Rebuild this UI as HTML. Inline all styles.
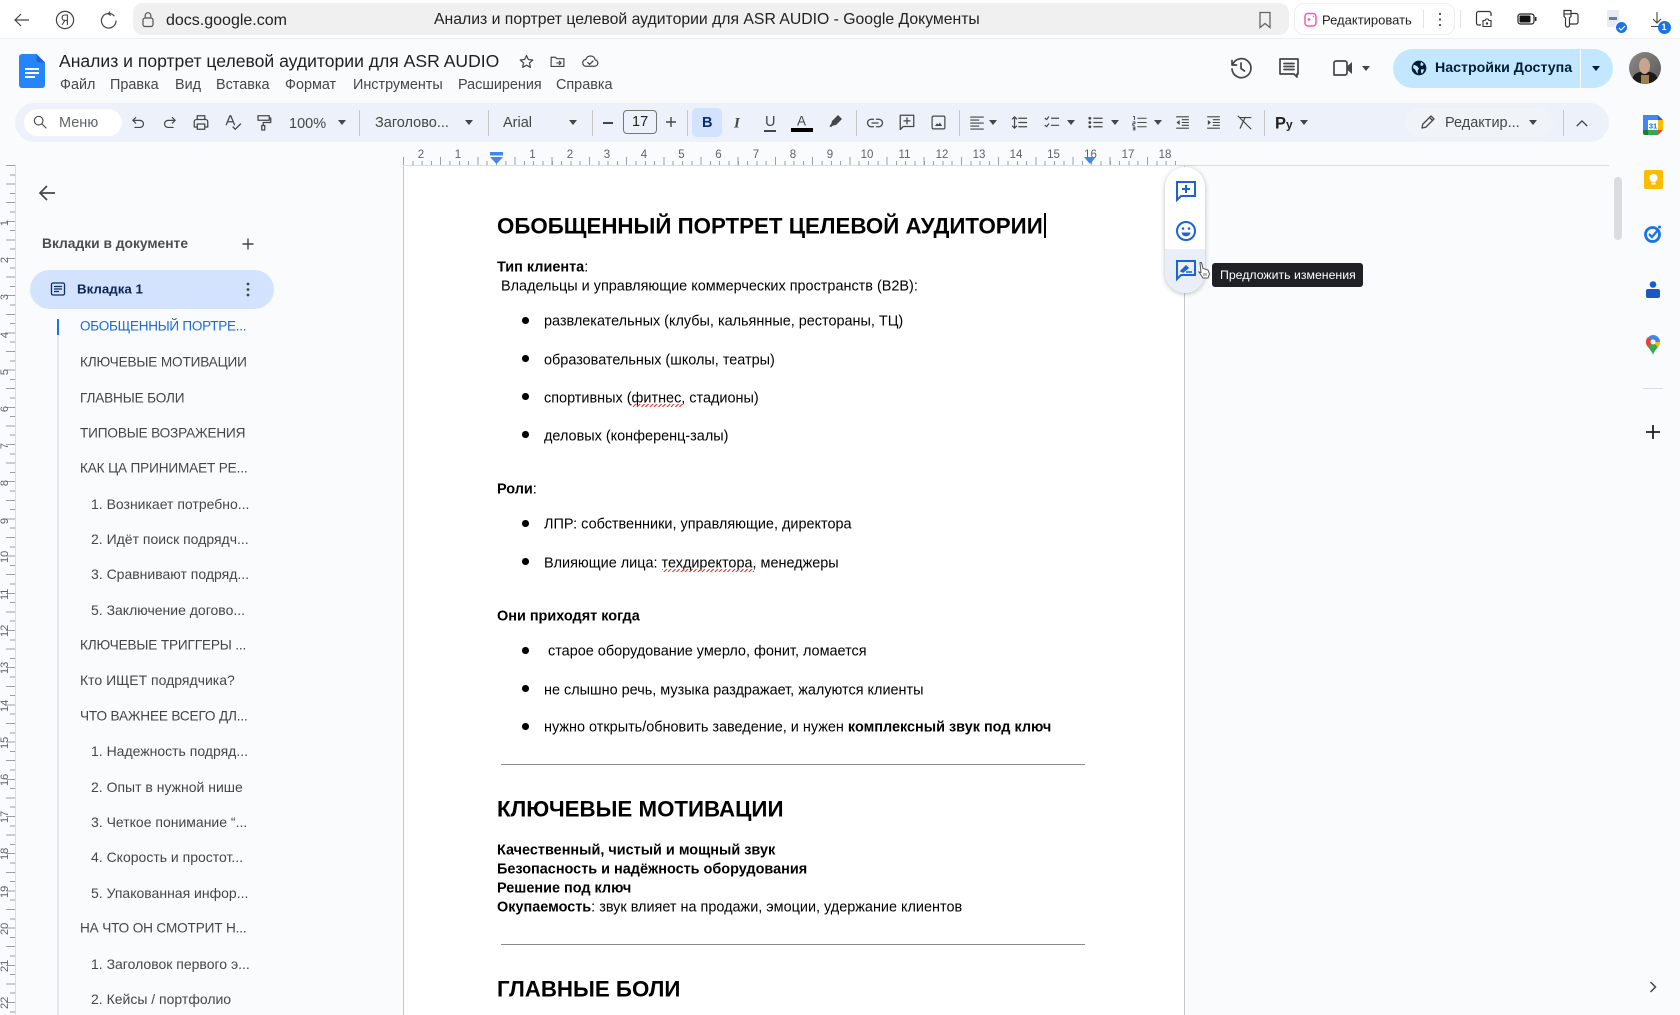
<!DOCTYPE html>
<html lang="ru"><head><meta charset="utf-8"><title>Анализ и портрет целевой аудитории для ASR AUDIO - Google Документы</title>
<style>
*{box-sizing:border-box}
html,body{margin:0;padding:0;width:1680px;height:1015px;overflow:hidden;background:#f9fbfd;font-family:"Liberation Sans","Noto Sans CJK SC",sans-serif;color:#000}
#w{position:relative;width:1680px;height:1015px;overflow:hidden;filter:blur(.35px)}
.b{position:absolute}
.t{position:absolute;white-space:nowrap;transform:translateY(calc(-50% + 1.5px));line-height:1.2}
.u{color:#444746;font-size:14.5px}
svg{position:absolute;overflow:visible}
.s{fill:none;stroke:#444746;stroke-width:1.7;stroke-linecap:round;stroke-linejoin:round}
.f{fill:#444746;stroke:none}
.sep{position:absolute;width:1px;top:110px;height:26px;background:#c7c7c7}
.dd{position:absolute;width:0;height:0;border-left:4.5px solid transparent;border-right:4.5px solid transparent;border-top:5px solid #444746;top:120px}
.t.d{font-size:14.45px;color:#000;transform:translateY(calc(-50% + 2px))}
.t.h{font-size:22.3px;font-weight:700;color:#000;transform:translateY(calc(-50% + 2px))}
.bul{position:absolute;left:522px;width:6.5px;height:6.5px;border-radius:50%;background:#000}
.r{position:absolute;top:148px;font-size:11.5px;color:#5f6368;transform:translateX(-50%);line-height:14px}
.rl{position:absolute;left:0;width:10px;text-align:center;font-size:11px;color:#5f6368;transform:rotate(-90deg);line-height:10px}
.n{font-size:14.4px;color:#444746}
.t.m{font-size:14px;color:#444746}
.t.c{font-size:13.6px;letter-spacing:-.15px;color:#444746}
.hr{position:absolute;left:501px;width:584px;height:1px;background:#8a8a8a}
.wave{position:absolute;height:3px;background:repeating-linear-gradient(135deg,#e33 0 1px,transparent 1px 3px)}
</style></head><body><div id="w">

<!-- browser bar -->
<div class="b" style="left:0;top:0;width:1680px;height:39px;background:#fff;border-bottom:1px solid #eceef1"></div>
<svg style="left:12px;top:10px" width="20" height="20" viewBox="0 0 20 20"><path d="M17 10H3M9 4l-6 6 6 6" fill="none" stroke="#444" stroke-width="1.2"/></svg>
<svg style="left:55px;top:10px" width="20" height="20" viewBox="0 0 20 20"><circle cx="10" cy="10" r="8.6" fill="none" stroke="#444" stroke-width="1.2"/><path d="M12.4 15V5H10c-1.8 0-2.9 1-2.9 2.7s1 2.7 2.9 2.7h2.4M9.8 10.400 7 15" fill="none" stroke="#444" stroke-width="1.1"/></svg>
<svg style="left:99px;top:10px" width="20" height="20" viewBox="0 0 20 20"><path d="M15.500 6.300A7.300 7.300 0 1 0 17 10.500M11 1.500l-1.600 2.400 2.600 1.500" fill="none" stroke="#444" stroke-width="1.200"/></svg>
<div class="b" style="left:133px;top:3px;width:1156px;height:32px;background:#f0f0f0;border-radius:10px"></div>
<svg style="left:141px;top:11px" width="14" height="17" viewBox="0 0 14 17"><rect x="2" y="7" width="10" height="8.500" rx="2" fill="none" stroke="#555" stroke-width="1.200"/><path d="M4.200 7V4.500a2.800 2.800 0 0 1 5.600 0V7" fill="none" stroke="#555" stroke-width="1.200"/></svg>
<div class="t" style="left:166px;top:19px;font-size:16px;color:#222">docs.google.com</div>
<div class="t" style="left:434px;top:19px;font-size:15.78px;color:#222">Анализ и портрет целевой аудитории для ASR AUDIO - Google Документы</div>
<svg style="left:1258px;top:11px" width="14" height="18" viewBox="0 0 14 18"><path d="M2 1.500h10v15l-5-4-5 4z" fill="none" stroke="#666" stroke-width="1.300"/></svg>
<div class="b" style="left:1294px;top:3px;width:161px;height:32px;background:#fff;border:1px solid #eee;border-radius:10px"></div>
<svg style="left:1304px;top:12px" width="14" height="15" viewBox="0 0 14 15"><rect x="1" y="1.500" width="11" height="12.500" rx="3" fill="none" stroke="#f15bb5" stroke-width="1.500"/><path d="M5 6v3M3.500 7.500h3M9 4l1 1" stroke="#f15bb5" stroke-width="1.200"/></svg>
<div class="t" style="left:1322px;top:18.500px;font-size:13px;color:#222">Редактировать</div>
<div class="b" style="left:1423px;top:10px;width:1px;height:18px;background:#e3e3e3"></div>
<svg style="left:1437px;top:12px" width="6" height="15" viewBox="0 0 6 15"><circle cx="3" cy="2" r="1.100" fill="#444"/><circle cx="3" cy="7.500" r="1.100" fill="#444"/><circle cx="3" cy="13" r="1.100" fill="#444"/></svg>
<div class="b" style="left:1460px;top:10px;width:1px;height:18px;background:#e3e3e3"></div>
<svg style="left:1475px;top:10px" width="18" height="18" viewBox="0 0 18 18"><path d="M6 15H3.500A2 2 0 0 1 1.500 13V3.500A2 2 0 0 1 3.500 1.500H14a2 2 0 0 1 2 2V6" fill="none" stroke="#333" stroke-width="1.200"/><path d="M8 10.500h2l1-1.500h2l1 1.500h2v6H8z" fill="none" stroke="#333" stroke-width="1.100"/><circle cx="12" cy="13.500" r="1.200" fill="#333"/></svg>
<svg style="left:1517px;top:13px" width="20" height="12" viewBox="0 0 20 12"><rect x="1" y="1" width="16" height="10" rx="2.500" fill="none" stroke="#222" stroke-width="1.200"/><rect x="2.500" y="2.500" width="11" height="7" rx="1" fill="#111"/><rect x="18" y="4" width="1.500" height="4" fill="#222"/></svg>
<svg style="left:1561px;top:9px" width="20" height="20" viewBox="0 0 20 20"><path d="M3 1.500h7v6l-1.500 1.500v7a2 2 0 0 1-4 0V9L3 7.500zM10 4.500h5a2 2 0 0 1 2 2V13a2 2 0 0 1-2 2H9" fill="none" stroke="#333" stroke-width="1.200"/><path d="M3 5h7" stroke="#333" stroke-width="1.100"/></svg>
<div class="b" style="left:1607px;top:10px;width:12px;height:17px;background:#e8ebef"></div><div class="b" style="left:1609px;top:17px;width:8px;height:3px;background:#5a7fb0"></div>
<div class="b" style="left:1615px;top:21px;width:13px;height:13px;background:#1a73e8;border-radius:50%;border:1px solid #fff"></div>
<svg style="left:1618px;top:24px" width="8" height="8" viewBox="0 0 8 8"><path d="M1 4l2 2 4-4" stroke="#fff" fill="none" stroke-width="1.200"/></svg>
<svg style="left:1650px;top:12px" width="14" height="16" viewBox="0 0 14 16"><path d="M7 0v10M3 7l4 4 4-4M1 14.500h10" fill="none" stroke="#444" stroke-width="1.100"/></svg>
<div class="b" style="left:1658px;top:21px;width:13px;height:13px;background:#1a73e8;border-radius:50%"></div>
<div class="t" style="left:1661.500px;top:26px;font-size:9px;font-weight:700;color:#fff">1</div>

<!-- docs header -->
<svg style="left:19px;top:54px" width="26" height="34" viewBox="0 0 26 34"><path d="M3 0h14.500L26 8.500V31a3 3 0 0 1-3 3H3a3 3 0 0 1-3-3V3a3 3 0 0 1 3-3z" fill="#2684fc"/><path d="M17.500 0 26 8.500h-6a2.500 2.500 0 0 1-2.500-2.500z" fill="#1967d2"/><path d="M6 14h14v2H6zM6 18h14v2H6zM6 22h10v2H6z" fill="#fff"/></svg>
<div class="t" style="left:59px;top:60px;font-size:17.57px;color:#1f1f1f">Анализ и портрет целевой аудитории для ASR AUDIO</div>
<svg style="left:518px;top:53px" width="17" height="17" viewBox="0 0 24 24"><path class="s" d="M12 3.500l2.600 5.700 6.200.7-4.600 4.200 1.300 6.100L12 17.200 6.500 20.200l1.300-6.100L3.200 9.900l6.200-.7z"/></svg>
<svg style="left:549px;top:53px" width="17" height="17" viewBox="0 0 24 24"><path class="s" d="M3 6h6l2 2h10v11H3zM11 14h6M14.500 11.500l2.500 2.500-2.500 2.500"/></svg>
<svg style="left:580px;top:52px" width="20" height="18" viewBox="0 0 24 24"><path class="s" d="M7 19a4.500 4.500 0 0 1-.6-9A6.500 6.500 0 0 1 19 10.500a4.300 4.300 0 0 1-1 8.500zM9 14l2.500 2.500L16 12"/></svg>
<div class="t n" style="left:60px;top:84px">Файл</div>
<div class="t n" style="left:110px;top:84px">Правка</div>
<div class="t n" style="left:175px;top:84px">Вид</div>
<div class="t n" style="left:216px;top:84px">Вставка</div>
<div class="t n" style="left:285px;top:84px">Формат</div>
<div class="t n" style="left:353px;top:84px">Инструменты</div>
<div class="t n" style="left:458px;top:84px">Расширения</div>
<div class="t n" style="left:556px;top:84px">Справка</div>

<svg style="left:1229px;top:56px" width="24" height="24" viewBox="0 0 24 24"><path class="s" d="M3.500 9A9.500 9.500 0 1 1 3 13M3 4.500V9h4.500M12 7v5.500l3.500 2.500" stroke-width="2"/></svg>
<svg style="left:1277px;top:56px" width="24" height="24" viewBox="0 0 24 24"><path class="s" d="M3 3h18v15h-1v3l-3-3H3zM7 7.500h10M7 10.500h10M7 13.500h10" stroke-width="2"/></svg>
<svg style="left:1331px;top:56px" width="24" height="24" viewBox="0 0 24 24"><path class="s" d="M5 5h9a2 2 0 0 1 2 2v10a2 2 0 0 1-2 2H3V7a2 2 0 0 1 2-2z" stroke-width="2"/><path class="f" d="M16.500 10 21 6v12l-4.500-4z"/></svg>
<div class="dd" style="left:1362px;top:66px"></div>
<div class="b" style="left:1393px;top:49px;width:220px;height:39px;background:#c2e7ff;border-radius:20px"></div>
<div class="b" style="left:1580px;top:49px;width:1px;height:39px;background:#f9fbfd"></div>
<svg style="left:1411px;top:60px" width="16" height="16" viewBox="0 0 24 24"><circle cx="12" cy="12" r="11" fill="#001d35"/><path d="M4 7l5 2 3 4-2 3v5l-2-3-2-4-3-2zM15 3l4 3-2 3-3-1zM15 14h5l-3 6-2-1z" fill="#c2e7ff"/></svg>
<div class="t" style="left:1435px;top:67px;font-size:14.2px;font-weight:700;color:#001d35">Настройки Доступа</div>
<div class="dd" style="left:1592px;top:66px;border-top-color:#001d35"></div>
<div class="b" style="left:1629px;top:52px;width:32px;height:32px;border-radius:50%;background:linear-gradient(135deg,#8d8b88,#5a5856);overflow:hidden">
<div class="b" style="left:3px;top:20px;width:26px;height:14px;border-radius:9px 9px 0 0;background:#1d1a18"></div>
<div class="b" style="left:12px;top:23px;width:8px;height:10px;background:#a08050"></div>
<div class="b" style="left:10px;top:6px;width:11px;height:16px;border-radius:50%;background:#c9a58c"></div></div>

<!-- toolbar -->
<div class="b" style="left:15px;top:103px;width:1594px;height:39px;background:#edf2fa;border-radius:20px"></div>
<div class="b" style="left:24px;top:109px;width:98px;height:27px;background:#fff;border-radius:14px"></div>
<svg style="left:32px;top:114px" width="16" height="16" viewBox="0 0 24 24"><path class="s" d="M10 3.500a6.500 6.500 0 1 1 0 13 6.500 6.500 0 0 1 0-13zM15 15l6 6"/></svg>
<div class="t u" style="left:59px;top:121.500px;color:#5f6368">Меню</div>
<svg style="left:130px;top:114px" width="17" height="17" viewBox="0 0 24 24"><path class="s" d="M8 5 4 9l4 4M4 9h10a5 5 0 0 1 0 10H7"/></svg>
<svg style="left:161px;top:114px" width="17" height="17" viewBox="0 0 24 24"><path class="s" d="M16 5l4 4-4 4M20 9H10a5 5 0 0 0 0 10h7"/></svg>
<svg style="left:192px;top:113px" width="18" height="19" viewBox="0 0 24 24"><path class="s" d="M7 8V3h10v5M7 18H3v-7a3 3 0 0 1 3-3h12a3 3 0 0 1 3 3v7h-4M7 14h10v7H7z"/></svg>
<svg style="left:224px;top:113px" width="18" height="19" viewBox="0 0 24 24"><path class="s" d="M3 15 8 3h1l5 12M5 11h7M12 18l3 3 7-7"/></svg>
<svg style="left:255px;top:113px" width="18" height="19" viewBox="0 0 24 24"><path class="s" d="M4 3h15v6H4zM19 6h2v6H11v4M9 16h4v6H9z"/></svg>
<div class="t u" style="left:289px;top:122.500px">100%</div><div class="dd" style="left:338px"></div>
<div class="sep" style="left:359px"></div>
<div class="t u" style="left:375px;top:121.500px">Заголово...</div><div class="dd" style="left:465px"></div>
<div class="sep" style="left:488px"></div>
<div class="t u" style="left:503px;top:121.500px">Arial</div><div class="dd" style="left:569px"></div>
<div class="sep" style="left:592px"></div>
<div class="b" style="left:603px;top:122px;width:10px;height:1.500px;background:#444746"></div>
<div class="b" style="left:623px;top:110px;width:34px;height:24px;border:1px solid #747775;border-radius:4px"></div>
<div class="t u" style="left:632px;top:121px;color:#222">17</div>
<svg style="left:664px;top:115px" width="14" height="14" viewBox="0 0 14 14"><path d="M7 2v10M2 7h10" stroke="#444746" stroke-width="1.400"/></svg>
<div class="sep" style="left:687px"></div>
<div class="b" style="left:692px;top:108px;width:30px;height:29px;background:#d3e3fd;border-radius:5px"></div>
<div class="t" style="left:702px;top:122px;font-size:14.500px;font-weight:700;color:#0b2d6b">B</div>
<div class="t" style="left:734px;top:122px;font-size:15px;font-style:italic;font-family:'Liberation Serif',serif;font-weight:700;color:#444746">I</div>
<div class="t" style="left:765px;top:121px;font-size:14.500px;color:#444746">U</div><div class="b" style="left:764px;top:130px;width:12px;height:1.500px;background:#444746"></div>
<div class="t" style="left:797px;top:120px;font-size:13.500px;color:#444746">A</div><div class="b" style="left:791px;top:128px;width:22px;height:4px;background:#000"></div>
<svg style="left:828px;top:113px" width="16" height="16" viewBox="0 0 24 24"><path class="f" d="M15 3l6 6-9 9-5 1-2 2-3-1 3-4 1-4z"/></svg>
<div class="sep" style="left:856px"></div>
<svg style="left:866px;top:114px" width="18" height="18" viewBox="0 0 24 24"><path class="s" d="M10 7H7a5 5 0 0 0 0 10h3M14 7h3a5 5 0 0 1 0 10h-3M8 12h8"/></svg>
<svg style="left:898px;top:113px" width="18" height="18" viewBox="0 0 24 24"><path class="s" d="M3 3h18v15H7l-4 4zM12 6.500v8M8 10.500h8"/></svg>
<svg style="left:930px;top:114px" width="17" height="17" viewBox="0 0 24 24"><rect class="s" x="3" y="3" width="18" height="18" rx="2"/><path class="f" d="M7 17l3-4 2 2 2-3 3 5z"/></svg>
<div class="sep" style="left:959px"></div>
<svg style="left:968px;top:114px" width="18" height="18" viewBox="0 0 24 24"><path d="M3 4h18M3 8h12M3 12h18M3 16h12M3 20h18" stroke="#444746" stroke-width="1.500" fill="none"/></svg><div class="dd" style="left:989px"></div>
<svg style="left:1011px;top:114px" width="17" height="17" viewBox="0 0 24 24"><path class="s" d="M5 4v16M2 7l3-3 3 3M2 17l3 3 3-3M11 6h11M11 12h11M11 18h11"/></svg>
<svg style="left:1043px;top:114px" width="17" height="17" viewBox="0 0 24 24"><path class="s" d="M3 6l2 2 3-4M12 6h10M3 16l2 2 3-4M12 16h10" stroke-width="1.500"/></svg><div class="dd" style="left:1067px"></div>
<svg style="left:1087px;top:114px" width="17" height="17" viewBox="0 0 24 24"><circle cx="4" cy="6" r="2" class="f"/><circle cx="4" cy="12" r="2" class="f"/><circle cx="4" cy="18" r="2" class="f"/><path d="M9 6h13M9 12h13M9 18h13" stroke="#444746" stroke-width="1.600"/></svg><div class="dd" style="left:1111px"></div>
<svg style="left:1131px;top:114px" width="17" height="17" viewBox="0 0 24 24"><path d="M9 6h13M9 12h13M9 18h13M3 3.500h2v5M2.500 11h3v2.500h-3V16h3M2.500 18.500h3v4h-3M3 20.500h2" stroke="#444746" stroke-width="1.300" fill="none"/></svg><div class="dd" style="left:1154px"></div>
<svg style="left:1174px;top:114px" width="17" height="17" viewBox="0 0 24 24"><path d="M3 4h18M11 8h10M11 12h10M11 16h10M3 20h18" stroke="#444746" stroke-width="1.500" fill="none"/><path class="f" d="M8 8.500v7L3.500 12z"/></svg>
<svg style="left:1205px;top:114px" width="17" height="17" viewBox="0 0 24 24"><path d="M3 4h18M11 8h10M11 12h10M11 16h10M3 20h18" stroke="#444746" stroke-width="1.500" fill="none"/><path class="f" d="M4 8.500v7L8.500 12z"/></svg>
<svg style="left:1236px;top:114px" width="17" height="17" viewBox="0 0 24 24"><path class="s" d="M5 5h16M13 5l-4 8-3 7M3 3l18 18" stroke-width="1.600"/></svg>
<div class="sep" style="left:1264px"></div>
<div class="t" style="left:1275px;top:122.500px;font-size:16.500px;font-weight:700;color:#222">Р<span style="font-size:12px">у</span></div><div class="dd" style="left:1300px"></div>
<div class="b" style="left:1405px;top:108px;width:148px;height:29px;background:#f0f4f9;border-radius:15px"></div>
<svg style="left:1419px;top:113px" width="18" height="18" viewBox="0 0 24 24"><path class="s" d="M4 20l1-5L16 4l4 4L9 19zM14 6l4 4"/></svg>
<div class="t u" style="left:1445px;top:121.500px">Редактир...</div><div class="dd" style="left:1529px"></div>
<div class="sep" style="left:1563px"></div>
<svg style="left:1575px;top:119px" width="14" height="9" viewBox="0 0 16 10"><path d="M2 8l6-6 6 6" fill="none" stroke="#444746" stroke-width="1.500"/></svg>

<!-- horizontal ruler -->
<div class="b" style="left:403px;top:157px;width:781px;height:8px;background:repeating-linear-gradient(90deg,#9aa0a6 0 1px,transparent 1px 37.200px) -0.100px 0/100% 8px no-repeat"></div>
<div class="b" style="left:403px;top:161px;width:781px;height:4px;background:repeating-linear-gradient(90deg,#9aa0a6 0 1px,transparent 1px 9.300px)"></div>
<div class="b" style="left:15px;top:164.500px;width:1594px;height:1.500px;background:#dadce0"></div>
<div class="r" style="left:421px">2</div><div class="r" style="left:458px">1</div>
<div class="r" style="left:532.500px">1</div><div class="r" style="left:570px">2</div><div class="r" style="left:607px">3</div><div class="r" style="left:644px">4</div><div class="r" style="left:681.500px">5</div><div class="r" style="left:718.500px">6</div><div class="r" style="left:756px">7</div><div class="r" style="left:793px">8</div><div class="r" style="left:830px">9</div><div class="r" style="left:867px">10</div><div class="r" style="left:904.500px">11</div><div class="r" style="left:942px">12</div><div class="r" style="left:979px">13</div><div class="r" style="left:1016px">14</div><div class="r" style="left:1053.500px">15</div><div class="r" style="left:1090.500px">16</div><div class="r" style="left:1128px">17</div><div class="r" style="left:1165px">18</div>
<svg style="left:490px;top:152px" width="13" height="13" viewBox="0 0 13 13"><rect x="0" y="0" width="13" height="3.500" fill="#4285f4"/><path d="M0 5h13l-6.500 7z" fill="#4285f4"/></svg>
<svg style="left:1084px;top:157px" width="12" height="8" viewBox="0 0 12 8"><path d="M0 0h12L6 7z" fill="#4285f4"/></svg>

<!-- vertical ruler -->
<div class="b" style="left:10px;top:165px;width:5px;height:850px;background:repeating-linear-gradient(180deg,#9aa0a6 0 1px,transparent 1px 9.300px)"></div>
<div class="b" style="left:6px;top:165px;width:9px;height:850px;background:repeating-linear-gradient(180deg,#9aa0a6 0 1px,transparent 1px 18.600px)"></div>
<div class="rl" style="top:218px">1</div><div class="rl" style="top:255px">2</div><div class="rl" style="top:292px">3</div><div class="rl" style="top:330px">4</div><div class="rl" style="top:367px">5</div><div class="rl" style="top:404px">6</div><div class="rl" style="top:441px">7</div><div class="rl" style="top:478px">8</div><div class="rl" style="top:516px">9</div><div class="rl" style="top:553px">10</div><div class="rl" style="top:590px">11</div><div class="rl" style="top:627px">12</div><div class="rl" style="top:664px">13</div><div class="rl" style="top:702px">14</div><div class="rl" style="top:739px">15</div><div class="rl" style="top:776px">16</div><div class="rl" style="top:813px">17</div><div class="rl" style="top:850px">18</div><div class="rl" style="top:888px">19</div><div class="rl" style="top:925px">20</div><div class="rl" style="top:962px">21</div><div class="rl" style="top:999px">22</div>

<!-- sidebar -->
<div class="b" style="left:15px;top:165px;width:388px;height:850px;background:#f9fbfd;border-left:1px solid #dadce0"></div>
<svg style="left:37px;top:183px" width="20" height="20" viewBox="0 0 20 20"><path d="M18 10H3M10 3l-7 7 7 7" fill="none" stroke="#444746" stroke-width="1.700"/></svg>
<div class="t" style="left:42px;top:243px;font-size:13.8px;font-weight:700;color:#4b4d4f">Вкладки в документе</div>
<svg style="left:242px;top:238px" width="12" height="12" viewBox="0 0 12 12"><path d="M6 .5v11M.5 6h11" stroke="#444746" stroke-width="1.400"/></svg>
<div class="b" style="left:30px;top:270px;width:244px;height:39px;background:#d3e3fd;border-radius:20px"></div>
<svg style="left:50px;top:281px" width="16" height="16" viewBox="0 0 16 16"><rect x="1.500" y="2" width="13" height="12" rx="1.500" fill="none" stroke="#0b2d6b" stroke-width="1.300"/><path d="M4 5.500h8M4 8h8M4 10.500h5" stroke="#0b2d6b" stroke-width="1.200"/></svg>
<div class="t" style="left:77px;top:288px;font-size:13.3px;font-weight:700;color:#0b2557">Вкладка 1</div>
<svg style="left:245px;top:282px" width="6" height="15" viewBox="0 0 6 15"><circle cx="3" cy="2" r="1.400" fill="#444746"/><circle cx="3" cy="7.500" r="1.400" fill="#444746"/><circle cx="3" cy="13" r="1.400" fill="#444746"/></svg>
<div class="b" style="left:57px;top:319px;width:2px;height:696px;background:#e3e6ea"></div>
<div class="b" style="left:57px;top:319px;width:2px;height:16px;background:#1a73e8"></div>
<div class="t" style="left:80px;top:325px;font-size:13.5px;letter-spacing:-.25px;color:#1a6adf">ОБОБЩЕННЫЙ ПОРТРЕ...</div>
<div class="t c" style="left:80px;top:361px">КЛЮЧЕВЫЕ МОТИВАЦИИ</div>
<div class="t c" style="left:80px;top:396.500px">ГЛАВНЫЕ БОЛИ</div>
<div class="t c" style="left:80px;top:432px">ТИПОВЫЕ ВОЗРАЖЕНИЯ</div>
<div class="t c" style="left:80px;top:467px">КАК ЦА ПРИНИМАЕТ РЕ...</div>
<div class="t m" style="left:91px;top:502.500px">1. Возникает потребно...</div>
<div class="t m" style="left:91px;top:538px">2. Идёт поиск подрядч...</div>
<div class="t m" style="left:91px;top:573px">3. Сравнивают подряд...</div>
<div class="t m" style="left:91px;top:608.500px">5. Заключение догово...</div>
<div class="t c" style="left:80px;top:644px">КЛЮЧЕВЫЕ ТРИГГЕРЫ ...</div>
<div class="t m" style="left:80px;top:679px">Кто ИЩЕТ подрядчика?</div>
<div class="t c" style="left:80px;top:714.500px">ЧТО ВАЖНЕЕ ВСЕГО ДЛ...</div>
<div class="t m" style="left:91px;top:750px">1. Надежность подряд...</div>
<div class="t m" style="left:91px;top:785.500px">2. Опыт в нужной нише</div>
<div class="t m" style="left:91px;top:821px">3. Четкое понимание “...</div>
<div class="t m" style="left:91px;top:856px">4. Скорость и простот...</div>
<div class="t m" style="left:91px;top:891.500px">5. Упакованная инфор...</div>
<div class="t c" style="left:80px;top:927px">НА ЧТО ОН СМОТРИТ Н...</div>
<div class="t m" style="left:91px;top:962.500px">1. Заголовок первого э...</div>
<div class="t m" style="left:91px;top:998px">2. Кейсы / портфолио</div>

<!-- page -->
<div class="b" style="left:403px;top:166px;width:782px;height:849px;background:#fff;border-left:1px solid #c7c7c7;border-right:1px solid #c7c7c7"></div>
<div class="t h" style="left:497px;top:225px">ОБОБЩЕННЫЙ ПОРТРЕТ ЦЕЛЕВОЙ АУДИТОРИИ</div>
<div class="b" style="left:1044px;top:213px;width:1.500px;height:25px;background:#000"></div>
<div class="t d" style="left:497px;top:266px"><b>Тип клиента</b>:</div>
<div class="t d" style="left:501px;top:285px">Владельцы и управляющие коммерческих пространств (B2B):</div>
<div class="bul" style="top:317px"></div><div class="t d" style="left:544px;top:320px">развлекательных (клубы, кальянные, рестораны, ТЦ)</div>
<div class="bul" style="top:355px"></div><div class="t d" style="left:544px;top:358.500px">образовательных (школы, театры)</div>
<div class="bul" style="top:393px"></div><div class="t d" style="left:544px;top:396.500px">спортивных (фитнес, стадионы)</div>
<div class="wave" style="left:631px;top:404px;width:52px"></div>
<div class="bul" style="top:431px"></div><div class="t d" style="left:544px;top:434.500px">деловых (конференц-залы)</div>
<div class="t d" style="left:497px;top:487.500px"><b>Роли</b>:</div>
<div class="bul" style="top:520px"></div><div class="t d" style="left:544px;top:523px">ЛПР: собственники, управляющие, директора</div>
<div class="bul" style="top:558px"></div><div class="t d" style="left:544px;top:561.500px">Влияющие лица: техдиректора, менеджеры</div>
<div class="wave" style="left:662px;top:569px;width:92px"></div>
<div class="t d" style="left:497px;top:615px"><b>Они приходят когда</b></div>
<div class="bul" style="top:647px"></div><div class="t d" style="left:548px;top:650px">старое оборудование умерло, фонит, ломается</div>
<div class="bul" style="top:685px"></div><div class="t d" style="left:544px;top:688.500px">не слышно речь, музыка раздражает, жалуются клиенты</div>
<div class="bul" style="top:723px"></div><div class="t d" style="left:544px;top:726px">нужно открыть/обновить заведение, и нужен <b>комплексный звук под ключ</b></div>
<div class="hr" style="top:764px"></div>
<div class="t h" style="left:497px;top:808px">КЛЮЧЕВЫЕ МОТИВАЦИИ</div>
<div class="t d" style="left:497px;top:848.500px"><b>Качественный, чистый и мощный звук</b></div>
<div class="t d" style="left:497px;top:868px"><b>Безопасность и надёжность оборудования</b></div>
<div class="t d" style="left:497px;top:887px"><b>Решение под ключ</b></div>
<div class="t d" style="left:497px;top:906px"><b>Окупаемость</b>: звук влияет на продажи, эмоции, удержание клиентов</div>
<div class="hr" style="top:944px"></div>
<div class="t h" style="left:497px;top:988px">ГЛАВНЫЕ БОЛИ</div>

<!-- popup -->
<div class="b" style="left:1165px;top:167px;width:40px;height:126px;background:#fff;border-radius:20px;box-shadow:0 1px 5px rgba(60,64,67,.35);overflow:hidden"><div class="b" style="left:0;top:82px;width:40px;height:44px;background:#e9eef9"></div></div>
<svg style="left:1175px;top:180px" width="22" height="22" viewBox="0 0 22 22"><path d="M2 2h18v14H6l-4 4z" fill="none" stroke="#1a63d8" stroke-width="2"/><path d="M11 5v8M7 9h8" stroke="#1a63d8" stroke-width="2"/></svg>
<svg style="left:1175px;top:220px" width="22" height="22" viewBox="0 0 22 22"><circle cx="11" cy="11" r="9" fill="none" stroke="#1a63d8" stroke-width="2"/><circle cx="8" cy="8.500" r="1.300" fill="#1a63d8"/><circle cx="14" cy="8.500" r="1.300" fill="#1a63d8"/><path d="M6.500 12.500h9c-.5 2.500-2.200 3.800-4.500 3.800s-4-1.300-4.500-3.800z" fill="#1a63d8"/></svg>
<svg style="left:1175px;top:259px" width="22" height="22" viewBox="0 0 22 22"><path d="M2 2h18v14H6l-4 4z" fill="none" stroke="#1a63d8" stroke-width="2"/><path d="M6 12l5-5 2 2-5 4zM11 13h6" stroke="#1a63d8" stroke-width="1.500" fill="#1a63d8"/></svg>
<svg style="left:1197px;top:261px" width="14" height="18" viewBox="0 0 14 18"><path d="M3 1.500l1.500 0 1.500 6 5 1.500 1.500 4-1.500 4H6L2 11l2 .5z" fill="#fff" stroke="#555" stroke-width="1"/><path d="M7 12v3M9 12v3" stroke="#555" stroke-width=".8"/></svg>
<div class="b" style="left:1212px;top:263px;width:151px;height:24px;background:#202124;border-radius:3px"></div>
<div class="t" style="left:1220px;top:274px;font-size:12.300px;color:#fff">Предложить изменения</div>

<!-- scrollbar -->
<div class="b" style="left:1614px;top:177px;width:8px;height:63px;background:#dadce0;border-radius:4px"></div>

<!-- right apps -->
<svg style="left:1643px;top:115px" width="20" height="20" viewBox="0 0 20 20"><rect x="0" y="0" width="20" height="20" rx="2" fill="#fff"/><path d="M0 0h15v5H5v10H0z" fill="#4285f4"/><path d="M15 0l5 5h-5z" fill="#1967d2"/><path d="M15 5h5v10h-5z" fill="#fbbc04"/><path d="M5 15h10v5H5z" fill="#34a853"/><path d="M15 15h5l-5 5z" fill="#ea4335"/><path d="M0 15h5v5H2a2 2 0 0 1-2-2z" fill="#188038"/><text x="10" y="13.500" font-size="7.500" font-weight="700" text-anchor="middle" fill="#1967d2" font-family="Liberation Sans">31</text></svg>
<svg style="left:1643.500px;top:170px" width="19" height="19" viewBox="0 0 19 19"><rect width="19" height="19" rx="2" fill="#fbbc04"/><circle cx="9.500" cy="8" r="4" fill="#fff"/><rect x="7.500" y="12.500" width="4" height="2" fill="#fff"/></svg>
<svg style="left:1643px;top:224px" width="20" height="20" viewBox="0 0 20 20"><circle cx="9.500" cy="10.500" r="7" fill="none" stroke="#1a73e8" stroke-width="2.800"/><path d="M6 10l3 3 6-7" fill="none" stroke="#1a73e8" stroke-width="2.300"/><circle cx="16.500" cy="3" r="1.500" fill="#1a73e8"/></svg>
<svg style="left:1646px;top:281px" width="14" height="17" viewBox="0 0 14 17"><circle cx="7" cy="3.500" r="3.300" fill="#0f5fd6"/><path d="M2 8h10c1.200 0 2 .8 2 2v5a2 2 0 0 1-2 2H2a2 2 0 0 1-2-2v-5c0-1.200.8-2 2-2z" fill="#1a56c4"/></svg>
<svg style="left:1646px;top:335px" width="14" height="20" viewBox="0 0 14 20"><path d="M7 0a7 7 0 0 1 7 7c0 2-.8 3.500-2 5L2 2.500A7 7 0 0 1 7 0z" fill="#4285f4"/><path d="M2 2.500 12 12c-2 2.500-4 4.500-5 8-1-3.500-3-5-5-8z" fill="#34a853"/><path d="M2 2a7 7 0 0 0 0 10l5-5z" fill="#ea4335"/><path d="M7 7l5 5c1.200-1.500 2-3 2-5z" fill="#fbbc04"/><circle cx="7" cy="7" r="2.500" fill="#fff"/></svg>
<div class="b" style="left:1643px;top:388px;width:20px;height:1px;background:#dadce0"></div>
<svg style="left:1646px;top:425px" width="14" height="14" viewBox="0 0 14 14"><path d="M7 0v14M0 7h14" stroke="#222" stroke-width="1.800"/></svg>
<svg style="left:1649px;top:981px" width="8" height="12" viewBox="0 0 8 12"><path d="M1.500 1l5 5-5 5" fill="none" stroke="#444746" stroke-width="1.500"/></svg>
</div></body></html>
